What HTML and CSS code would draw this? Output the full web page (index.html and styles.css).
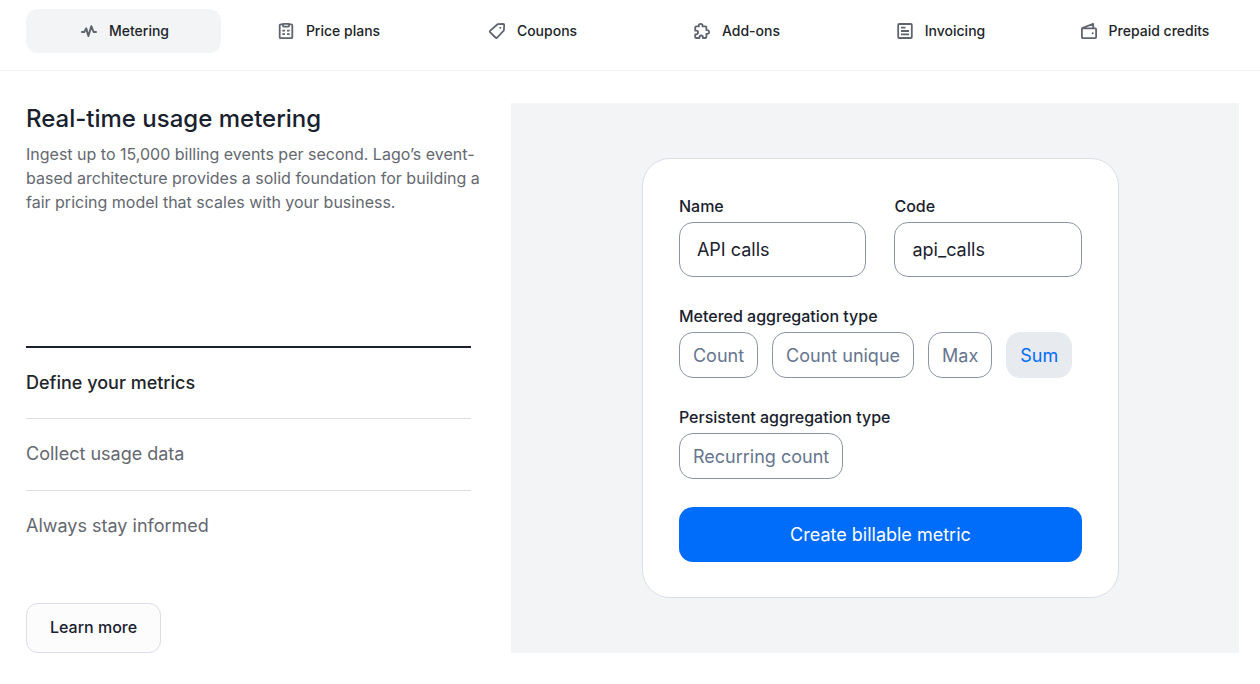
FILE: index.html
```html
<!DOCTYPE html>
<html lang="en">
<head>
<meta charset="utf-8">
<meta name="viewport" content="width=device-width, initial-scale=1">
<title>Real-time usage metering</title>
<link rel="stylesheet" href="styles.css">
</head>
<body>
<nav class="tabs" aria-label="Features">
  <button class="tab tab-active" type="button">
    <svg class="icon" viewBox="0 0 16 16" aria-hidden="true"><path stroke-width="2" stroke-linecap="round" d="M1 9H3.2L5.2 5.4L7.4 13L10.3 3.2L12.6 9H15"/></svg>
    Metering
  </button>
  <button class="tab" type="button">
    <svg class="icon" viewBox="0 0 16 16" aria-hidden="true"><path d="M5 1.3H2.7Q1.7 1.3 1.7 2.3V14.2Q1.7 15.2 2.7 15.2H13.3Q14.3 15.2 14.3 14.2V2.3Q14.3 1.3 13.3 1.3H11M5 .9H11V2.7Q11 3.7 10 3.7H6Q5 3.7 5 2.7ZM4.3 7.7H7M9 7.7H11.7M4.3 11.2H7M9 11.2H11.7"/></svg>
    Price plans
  </button>
  <button class="tab" type="button">
    <svg class="icon" viewBox="0 0 16 16" aria-hidden="true"><path d="M8.6 1.2L14.2.9Q15.2.9 15.2 1.9L14.9 7.3L8.3 14.5Q7.4 15.4 6.5 14.5L1.2 9.3Q.4 8.4 1.2 7.6Z"/><circle class="icon-dot" cx="11.3" cy="4.8" r="1"/></svg>
    Coupons
  </button>
  <button class="tab" type="button">
    <svg class="icon" viewBox="0 0 16 16" aria-hidden="true"><path d="M2.2 3.4H4.8V2.7A1.9 1.9 0 0 1 8.6 2.7V3.4H11.4Q12.4 3.4 12.4 4.4V7.1H13.2A1.9 1.9 0 0 1 13.2 10.9H12.4V14Q12.4 15 11.4 15H8.9V14.2A1.7 1.7 0 0 0 5.5 14.2V15H2.2Q1.2 15 1.2 14V11.3H2.3A1.7 1.7 0 0 0 2.3 7.7H1.2V4.4Q1.2 3.4 2.2 3.4Z"/></svg>
    Add-ons
  </button>
  <button class="tab" type="button">
    <svg class="icon" viewBox="0 0 16 16" aria-hidden="true"><rect x="1.2" y="1" width="13.6" height="14" rx="1"/><path d="M4 4.7H8.5M4 8H12M4 11.3H12"/></svg>
    Invoicing
  </button>
  <button class="tab" type="button">
    <svg class="icon" viewBox="0 0 16 16" aria-hidden="true"><path d="M.9 5.4H14.2Q15.1 5.4 15.1 6.3V14.2Q15.1 15.1 14.2 15.1H1.8Q.9 15.1.9 14.2ZM1.1 5L12.2.9V5.2"/><circle class="icon-dot" cx="11.7" cy="10.2" r="1"/></svg>
    Prepaid credits
  </button>
</nav>
<main class="feature">
  <section class="intro">
    <h2 class="title">Real-time usage metering</h2>
    <p class="lead">Ingest up to 15,000 billing events per second. Lago’s event-<wbr>based architecture provides a solid foundation for building a fair pricing model that scales with your business.</p>
    <div class="steps">
      <button class="step step-active" type="button">Define your metrics</button>
      <button class="step" type="button">Collect usage data</button>
      <button class="step" type="button">Always stay informed</button>
    </div>
    <a class="learn" href="#learn">Learn more</a>
  </section>
  <section class="preview">
    <form class="card">
      <div class="fields">
        <div class="group">
          <label class="label" for="name">Name</label>
          <input class="field" id="name" type="text" value="API calls">
        </div>
        <div class="group">
          <label class="label" for="code">Code</label>
          <input class="field" id="code" type="text" value="api_calls">
        </div>
      </div>
      <div class="group" role="group" aria-labelledby="metered">
        <span class="label" id="metered">Metered aggregation type</span>
        <div class="chips">
          <button class="chip" type="button">Count</button>
          <button class="chip" type="button">Count unique</button>
          <button class="chip" type="button">Max</button>
          <button class="chip chip-active" type="button">Sum</button>
        </div>
      </div>
      <div class="group" role="group" aria-labelledby="persistent">
        <span class="label" id="persistent">Persistent aggregation type</span>
        <div class="chips">
          <button class="chip" type="button">Recurring count</button>
        </div>
      </div>
      <button class="submit" type="button">Create billable metric</button>
    </form>
  </section>
</main>
</body>
</html>
```
FILE: styles.css
```css
* { box-sizing: border-box; }
body { margin: 0; background: #fff; color: #19212e; font-family: Inter, "Liberation Sans", sans-serif; }
button, input { font: inherit; color: inherit; }
button { cursor: pointer; }

.tabs { display: grid; grid-template-columns: repeat(6, minmax(0, 1fr)); gap: 9px; padding: 9px 19px 17px 26px; border-bottom: 1px solid #f3f4f6; }
.tab { display: flex; align-items: center; justify-content: center; gap: 12px; height: 44px; padding: 0 0 0 3px; border: 0; border-radius: 12px; background: none; color: #212529; font-size: 14px; font-weight: 500; line-height: 20px; white-space: nowrap; }
.tab-active { background: #f3f4f6; }
.icon { width: 16px; height: 16px; flex: none; overflow: visible; fill: none; stroke: #60646f; stroke-width: 1.8; stroke-linejoin: round; }
.icon-dot { fill: #60646f; stroke: none; }

.feature { display: grid; grid-template-columns: minmax(0, 11fr) minmax(0, 18fr); gap: 40px; padding: 32px 21px 31px 26px; }
.intro { display: flex; flex-direction: column; align-items: flex-start; }
.title { margin: 0 0 7px; font-size: 24px; font-weight: 500; line-height: 32px; }
.lead { margin: 0 -24px 0 0; color: #646870; font-size: 16px; line-height: 24px; }
.steps { display: flex; flex-direction: column; width: 100%; margin-top: auto; margin-bottom: 41px; }
.step { height: 72px; padding: 0 0 2px; border: 0; border-top: 1px solid #d9dee7; background: none; color: #646870; font-size: 18px; line-height: 28px; text-align: left; }
.step-active { padding-bottom: 0; border-top: 2px solid #19212e; color: #212529; font-weight: 500; }
.learn { padding: 11px 23px 13px; border: 1px solid #d9dee7; border-radius: 12px; background: #fcfcfd; color: #19212e; font-size: 16px; font-weight: 500; line-height: 24px; text-decoration: none; }

.preview { display: flex; align-items: center; justify-content: center; padding: 55px 24px 55px 35px; background: #f3f4f6; }
.card { display: flex; flex-direction: column; gap: 28px; width: 100%; max-width: 477px; margin: 0; padding: 36px 36px 35px; border: 1px solid #d9dee7; border-radius: 28px; background: #fff; }
.fields { display: grid; grid-template-columns: repeat(2, minmax(0, 1fr)); gap: 28px; }
.group { display: flex; flex-direction: column; gap: 5px; }
.label { font-size: 16px; font-weight: 500; line-height: 22px; }
.field { width: 100%; height: 55px; padding: 0 17px; border: 1px solid #8c95a6; border-radius: 14px; background: #fff; font-size: 18px; }
.chips { display: flex; flex-wrap: wrap; gap: 14px; }
.chip { height: 46px; padding: 0 13px; border: 1px solid #8c95a6; border-radius: 14px; background: #fff; color: #66758f; font-size: 18px; }
.chip-active { border-color: #e7eaee; background: #e7eaee; color: #006cfa; }
.submit { height: 55px; padding: 0; border: 0; border-radius: 14px; background: #006cfa; color: #fff; font-size: 18px; }
```
